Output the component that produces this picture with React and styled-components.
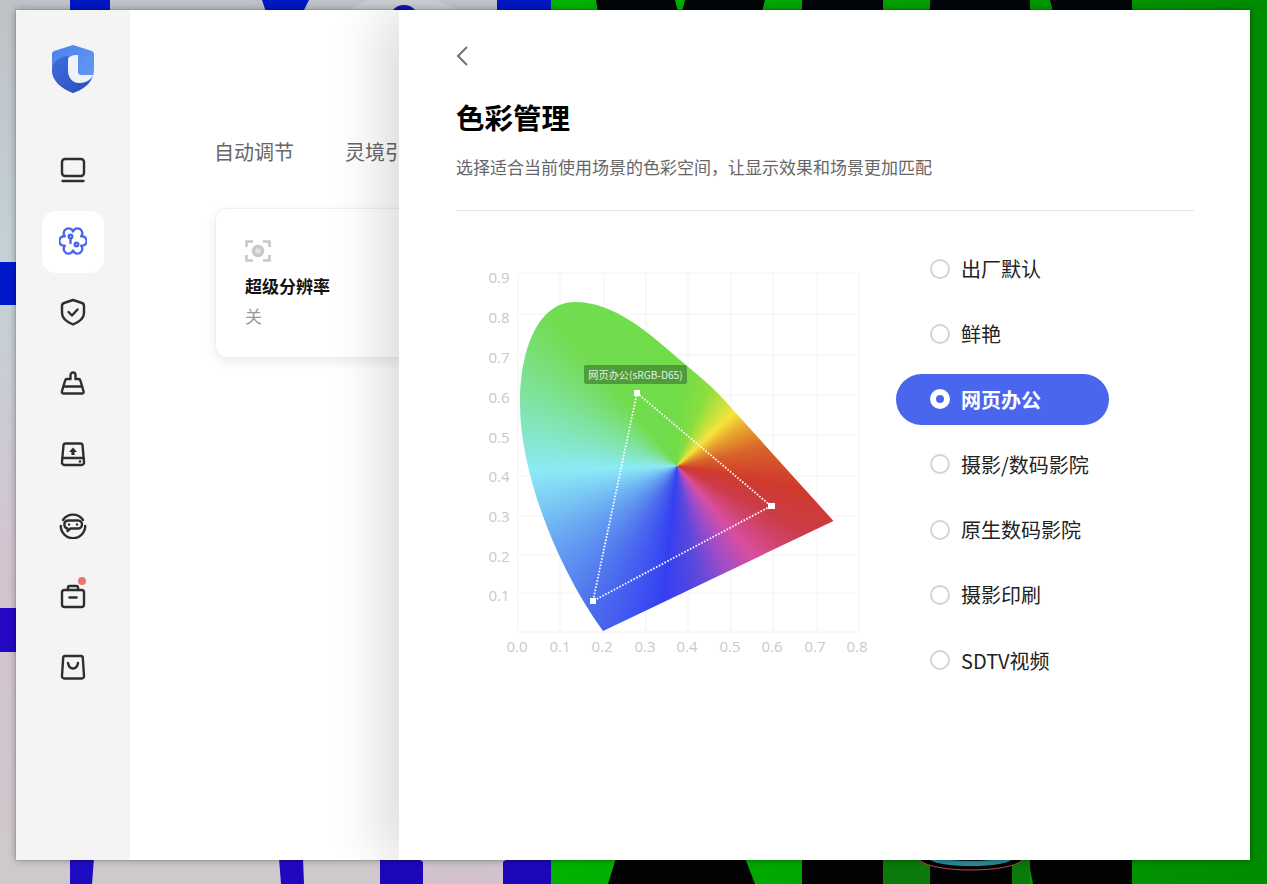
import React from 'react';
import styled, { createGlobalStyle } from 'styled-components';

const Global = createGlobalStyle`
  html, body { margin: 0; padding: 0; background: #c8c8cc; }
  body { font-family: "Noto Sans CJK SC", "Noto Sans", sans-serif; overflow: hidden; }
  * { box-sizing: border-box; }
`;

const Desktop = styled.div`
  position: relative;
  width: 1267px;
  height: 884px;
  padding: 10px 17px 24px 16px;
  overflow: hidden;
`;
const WallpaperSvg = styled.svg`
  position: absolute;
  inset: 0;
`;
const AppWindow = styled.div`
  position: relative;
  display: flex;
  height: 100%;
  background: #fff;
  overflow: hidden;
  outline: 1px solid rgba(0,0,0,.08);
  box-shadow: 0 0 8px rgba(0,0,0,.32);
`;
const Sidebar = styled.aside`
  flex: 0 0 114px;
  background: #f4f4f4;
  display: flex;
  flex-direction: column;
  align-items: center;
  padding: 34px 0 0;
`;
const LogoMark = styled.svg`
  width: 46px;
  height: 50px;
  margin-bottom: 46px;
`;
const Nav = styled.nav`
  display: flex;
  flex-direction: column;
  gap: 9px;
`;
const NavItem = styled.div`
  position: relative;
  width: 62px;
  height: 62px;
  padding-bottom: 2px;
  border-radius: 14px;
  display: flex;
  align-items: center;
  justify-content: center;
  background: ${p => (p.$active ? '#fff' : 'transparent')};
  color: ${p => (p.$active ? '#4c65f0' : '#2e2e2e')};
`;
const NavIcon = styled.svg`
  width: 28px;
  height: 28px;
  fill: none;
  stroke: currentColor;
  stroke-width: 2.4;
  stroke-linecap: round;
  stroke-linejoin: round;
`;
const Dot = styled.span`
  position: absolute;
  top: 11px;
  right: 18px;
  width: 8px;
  height: 8px;
  border-radius: 50%;
  background: #e8766e;
`;
const Main = styled.main`
  flex: 1;
  padding: 127px 0 0 85px;
  min-width: 0;
`;
const Tabs = styled.div`
  display: flex;
  gap: 51px;
  height: 30px;
  margin-left: -1px;
  font-size: 20px;
  line-height: 30px;
  color: #666;
`;
const FeatureCard = styled.div`
  width: 420px;
  height: 150px;
  margin-top: 41px;
  padding: 30px 29px;
  border: 1px solid #efefef;
  border-radius: 12px;
  background: #fff;
  box-shadow: 0 4px 12px rgba(0,0,0,.08);
`;
const CardIcon = styled.svg`
  display: block;
  width: 26px;
  height: 24px;
`;
const CardTitle = styled.div`
  margin-top: 10px;
  font-size: 17px;
  line-height: 26px;
  font-weight: 700;
  color: #111;
`;
const CardValue = styled.div`
  margin-top: 4px;
  font-size: 17px;
  line-height: 26px;
  color: #999;
`;
const Panel = styled.section`
  position: absolute;
  top: 0;
  bottom: 0;
  left: 383px;
  right: 0;
  background: #fff;
  padding: 0 56px 0 57px;
  box-shadow: -18px 0 50px rgba(0,0,0,.14);
`;
const BackIcon = styled.svg`
  display: block;
  width: 14px;
  height: 24px;
  margin-top: 34px;
  fill: none;
  stroke: #707070;
  stroke-width: 2;
`;
const Title = styled.h1`
  margin: 27px 0 0;
  font-size: 28.5px;
  line-height: 44px;
  font-weight: 700;
  color: #000;
`;
const Subtitle = styled.p`
  margin: 15px 0 0;
  font-size: 17px;
  line-height: 26px;
  color: #666;
`;
const Divider = styled.hr`
  margin: 30px 0 0;
  border: 0;
  border-top: 1px solid #e5e5e5;
`;
const Body = styled.div`
  display: flex;
  padding-top: 32px;
`;
const ChartBox = styled.div`
  position: relative;
  flex: 0 0 440px;
  height: 420px;
  margin-top: 1px;
`;
const ChartSvg = styled.svg`
  position: absolute;
  inset: 0;
  width: 440px;
  height: 420px;
`;
const AxisLabel = styled.text`
  font-family: "Open Sans", "Noto Sans", sans-serif;
  font-size: 15px;
  fill: #c9c9c9;
`;
const Gamut = styled.div`
  position: absolute;
  inset: 0;
  clip-path: path("M147 387 L377.5 277 L279 168 C259 144 244 133 224 116 C194 90 159 58 119 58 C84 58 64 101 64 161 C64 226 99 321 147 387 Z");
  background: conic-gradient(from 0deg at 221px 222px,
    #70dc48 0deg, #8ade40 22deg, #f6e43c 47deg, #e8a52e 60deg, #d8642a 78deg,
    #d03a2c 100deg, #cc3c48 118deg, #d84ea0 140deg, #a04cc8 155deg, #5a48dc 170deg,
    #3440f2 186deg, #4e70ee 212deg, #6aaaf2 240deg, #8ceaf6 268deg, #82e4b0 290deg,
    #72dc50 320deg, #70dc48 360deg);
`;
const Tooltip = styled.div`
  position: absolute;
  left: 128px;
  top: 121px;
  width: 103px;
  height: 19px;
  border-radius: 2px;
  background: #4f9c3c;
  color: #e6f3df;
  font-size: 10.2px;
  line-height: 19px;
  text-align: center;
  white-space: nowrap;
`;
const OptionList = styled.ul`
  list-style: none;
  margin: 0;
  padding: 0;
  display: flex;
  flex-direction: column;
  gap: 14.3px;
  width: 213px;
`;
const Option = styled.li`
  height: 51px;
  display: flex;
  align-items: center;
  gap: 11px;
  padding-left: 34px;
  border-radius: 26px;
  font-size: 20px;
  font-weight: ${p => (p.$selected ? 700 : 400)};
  color: ${p => (p.$selected ? '#fff' : '#222')};
  background: ${p => (p.$selected ? '#4b66ee' : 'transparent')};
`;
const Radio = styled.span`
  flex: 0 0 20px;
  height: 20px;
  border-radius: 50%;
  border: ${p => (p.$selected ? '6px solid #fff' : '2px solid #d4d4d4')};
  background: ${p => (p.$selected ? '#4b66ee' : '#fff')};
`;

const Wallpaper = () => (
  <WallpaperSvg width="1267" height="884" viewBox="0 0 1267 884">
    <defs>
      <linearGradient id="wl" x1="0" y1="0" x2="0" y2="1">
        <stop offset="0" stopColor="#bfc2c6" />
        <stop offset=".3" stopColor="#c4d2d8" />
        <stop offset=".65" stopColor="#d4c4d0" />
        <stop offset="1" stopColor="#cfc9cd" />
      </linearGradient>
      <linearGradient id="wg" x1="0" y1="0" x2="1" y2="0">
        <stop offset="0" stopColor="#00b400" />
        <stop offset="1" stopColor="#008c00" />
      </linearGradient>
    </defs>
    <rect width="551" height="884" fill="url(#wl)" />
    <rect x="551" width="716" height="884" fill="url(#wg)" />
    <rect x="70" width="40" height="12" fill="#0018c4" />
    <polygon points="262,0 309,0 303,12 266,12" fill="#0018c4" />
    <circle cx="403" cy="90" r="96" fill="#c8ccd0" />
    <circle cx="404" cy="20" r="15" fill="#0a1aa8" />
    <rect x="497" width="54" height="12" fill="#0018c4" />
    <rect y="262" width="18" height="43" fill="#0018cc" />
    <rect y="608" width="18" height="44" fill="#2408c4" />
    <g fill="#020608">
      <polygon points="596,0 675,0 678,12 598,12" />
      <polygon points="685,0 765,0 762,12 682,12" />
      <rect x="802" width="81" height="12" />
      <rect x="930" width="100" height="12" />
      <polygon points="1050,0 1132,0 1132,12 1053,12" />
    </g>
    <polygon points="70,858 94,858 92,884 70,884" fill="#1e0cc0" />
    <polygon points="279,858 303,858 304,884 281,884" fill="#2008c0" />
    <rect x="380" y="858" width="171" height="26" fill="#1c08b8" />
    <rect x="423" y="858" width="80" height="26" fill="#d2c2ce" />
    <ellipse cx="463" cy="858" rx="44" ry="9" fill="#c8c4c8" />
    <g fill="#030303">
      <polygon points="616,858 745,858 755,884 608,884" />
      <rect x="802" y="858" width="81" height="26" />
      <rect x="930" y="858" width="82" height="26" />
      <polygon points="1028,858 1132,858 1132,884 1033,884" />
    </g>
    <rect x="883" y="858" width="47" height="26" fill="#0a7a0a" />
    <rect x="1012" y="858" width="18" height="26" fill="#0a7a0a" />
    <ellipse cx="971" cy="858" rx="52" ry="12" fill="#030303" stroke="#c0405a" strokeWidth="1" />
    <ellipse cx="971" cy="858" rx="42" ry="8" fill="#2a8a9a" />
    <ellipse cx="971" cy="858" rx="30" ry="3" fill="#041a24" />
  </WallpaperSvg>
);

const Logo = () => (
  <LogoMark viewBox="0 0 46 50">
    <defs>
      <linearGradient id="lg1" x1="0" y1="0" x2="1" y2="1">
        <stop offset="0" stopColor="#4a82ea" />
        <stop offset="1" stopColor="#6a9cf8" />
      </linearGradient>
      <linearGradient id="lg2" x1="0" y1="0" x2="1" y2="1">
        <stop offset="0" stopColor="#3f6cdc" />
        <stop offset="1" stopColor="#2a50bc" />
      </linearGradient>
    </defs>
    <path d="M23 1 L42 7 Q44 8 44 10 V26 C44 37 34 45 23 49 C12 45 2 37 2 26 V10 Q2 8 4 7 Z" fill="url(#lg1)" />
    <path d="M18 12 C8 13 2 19 2 26 C2 37 12 45 23 49 C32 46 39 41 42 34 C34 42 24 40 18 30 Z" fill="url(#lg2)" />
    <path d="M18 16 C18 13 21 11 28 11 V28 Q28 31 31 31 L43 31 C40 37 34 39 29 39 C22 39 18 33 18 26 Z" fill="#eef2fb" />
  </LogoMark>
);

const icons = [
  <><rect x="3" y="3" width="22" height="17" rx="3" /><path d="M3.5 25H24.5" /></>,
  <>
    <path d="M14 4.500A4.800 4.800 0 1 1 22.200 9.250A4.800 4.800 0 1 1 22.200 18.750A4.800 4.800 0 1 1 14 23.500A4.800 4.800 0 1 1 5.800 18.750A4.800 4.800 0 1 1 5.800 9.250A4.800 4.800 0 1 1 14 4.500Z" />
    <circle cx="11.500" cy="9.500" r="1.800" /><circle cx="17.500" cy="17.500" r="1.800" />
    <path d="M11.500 11.500V16" />
  </>,
  <>
    <path d="M14 2 L23 5 Q25 5.600 25 8 V15 C25 20 20 24 14 26.500 C8 24 3 20 3 15 V8 Q3 5.600 5 5 Z" />
    <path d="M9.500 14 L13 17.500 L18.500 11.500" />
  </>,
  <>
    <path d="M11.500 10V6a2.500 2.500 0 0 1 5 0v4h3a2 2 0 0 1 1.900 1.500l3.200 11a1.600 1.600 0 0 1-1.600 2H4.500a1.600 1.600 0 0 1-1.600-2l3.200-11A2 2 0 0 1 8 10z" />
    <path d="M5 17.500H23" />
  </>,
  <>
    <path d="M6.500 3.500H21.500a2 2 0 0 1 2 1.700L25 22a2.400 2.400 0 0 1-2.400 3H5.400A2.400 2.400 0 0 1 3 22L4.500 5.200a2 2 0 0 1 2-1.700z" />
    <path d="M3.500 18H24.500" />
    <path d="M14 7.500l4 4.500h-2.400v3h-3.200v-3H10z" fill="currentColor" stroke="none" />
    <circle cx="21" cy="21.500" r="1.300" fill="currentColor" stroke="none" />
  </>,
  <>
    <path d="M4 9A12 12 0 0 1 24 9" />
    <path d="M1.800 15A12.200 12.200 0 0 0 26.200 15" />
    <path d="M9 9.500h10a4 4 0 0 1 0 8h-7.500l-3 2.500v-2.600A4 4 0 0 1 9 9.500z" />
    <circle cx="10" cy="13.500" r="1.200" fill="currentColor" stroke="none" />
    <circle cx="18" cy="13.500" r="1.200" fill="currentColor" stroke="none" />
  </>,
  <>
    <rect x="3" y="8" width="22" height="17" rx="2.500" />
    <path d="M9 8V5.500A1.500 1.500 0 0 1 10.500 4h7A1.500 1.500 0 0 1 19 5.500V8" />
    <path d="M10.500 15.500H17.500" />
  </>,
  <>
    <path d="M6 3H22a1.800 1.800 0 0 1 1.800 1.700L25 23a2.200 2.200 0 0 1-2.200 2.500H5.200A2.200 2.200 0 0 1 3 23L4.200 4.700A1.800 1.800 0 0 1 6 3z" />
    <path d="M9 10c.6 3.600 2.600 5.500 5 5.500s4.400-1.900 5-5.500" />
  </>,
];

const gridX = [518, 560, 604, 646, 688, 731, 773, 817, 859];
const gridY = [273, 314, 355, 395, 435, 476, 516, 555, 593, 632];
const labelX = [517, 560, 602, 645, 687, 730, 772, 815, 857];
const labelY = [277, 317, 357, 397, 437, 476, 516, 556, 595];
const ox = 456;
const oy = 244;

const options = ['出厂默认', '鲜艳', '网页办公', '摄影/数码影院', '原生数码影院', '摄影印刷', 'SDTV视频'];

const Chart = () => (
  <ChartBox>
    <ChartSvg viewBox="0 0 440 420">
      {gridX.map(x => <line key={x} x1={x - ox} x2={x - ox} y1={273 - oy} y2={632 - oy} stroke="#f3f3f3" />)}
      {gridY.map(y => <line key={y} x1={518 - ox} x2={859 - ox} y1={y - oy} y2={y - oy} stroke="#f3f3f3" />)}
      {labelX.map((x, i) => (
        <AxisLabel key={x} x={x - ox} y={652 - oy} textAnchor="middle">{(i / 10).toFixed(1)}</AxisLabel>
      ))}
      {labelY.map((y, i) => (
        <AxisLabel key={y} x={499 - ox} y={y + 6 - oy} textAnchor="middle">{((9 - i) / 10).toFixed(1)}</AxisLabel>
      ))}
    </ChartSvg>
    <Gamut />
    <ChartSvg viewBox="0 0 440 420">
      <polygon points="181,149 315,262 137,357" fill="none" stroke="#fff" strokeWidth="1.800" strokeDasharray="1.600 1.600" />
      <rect x="178" y="146" width="6" height="6" fill="#fff" />
      <rect x="312" y="259" width="7" height="6" fill="#fff" />
      <rect x="134" y="354" width="6" height="6" fill="#fff" />
    </ChartSvg>
    <Tooltip>网页办公(sRGB-D65)</Tooltip>
  </ChartBox>
);

export default function App() {
  return (
    <Desktop>
      <Global />
      <Wallpaper />
      <AppWindow>
        <Sidebar>
          <Logo />
          <Nav>
            {icons.map((icon, i) => (
              <NavItem key={i} $active={i === 1}>
                <NavIcon viewBox="0 0 28 28">{icon}</NavIcon>
                {i === 6 && <Dot />}
              </NavItem>
            ))}
          </Nav>
        </Sidebar>
        <Main>
          <Tabs>
            <span>自动调节</span>
            <span>灵境引擎</span>
          </Tabs>
          <FeatureCard>
            <CardIcon viewBox="0 0 26 24">
              <path d="M1.500 8V2.500H8M18 2.500H24.500V8M1.500 16V21.500H8M18 21.500H24.500V16" fill="none" stroke="#c8c8c8" strokeWidth="2.600" />
              <circle cx="13" cy="12" r="4.500" fill="#e2e2e2" stroke="#c8c8c8" strokeWidth="3.500" />
            </CardIcon>
            <CardTitle>超级分辨率</CardTitle>
            <CardValue>关</CardValue>
          </FeatureCard>
        </Main>
        <Panel>
          <BackIcon viewBox="0 0 14 24">
            <path d="M11 3 L2 12 L11 21" />
          </BackIcon>
          <Title>色彩管理</Title>
          <Subtitle>选择适合当前使用场景的色彩空间，让显示效果和场景更加匹配</Subtitle>
          <Divider />
          <Body>
            <Chart />
            <OptionList>
              {options.map(o => (
                <Option key={o} $selected={o === '网页办公'}>
                  <Radio $selected={o === '网页办公'} />
                  {o}
                </Option>
              ))}
            </OptionList>
          </Body>
        </Panel>
      </AppWindow>
    </Desktop>
  );
}
